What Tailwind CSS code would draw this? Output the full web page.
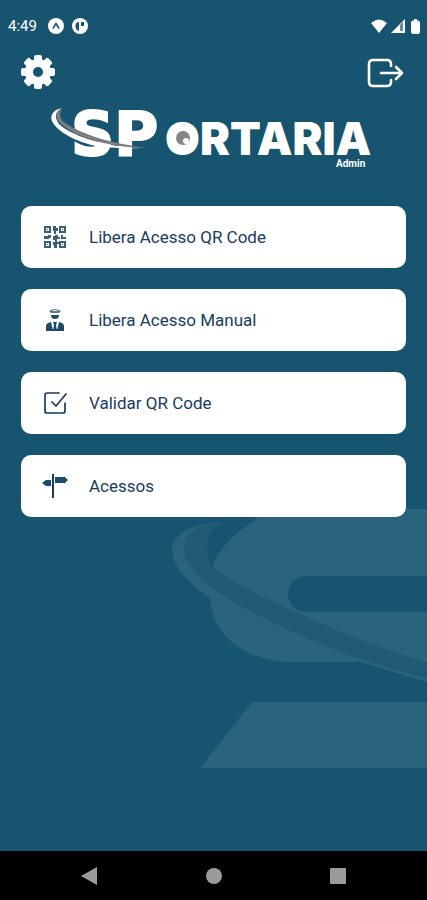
<!DOCTYPE html>
<html lang="pt-BR">
<head>
<meta charset="utf-8">
<meta name="viewport" content="width=device-width, initial-scale=1">
<title>SPortaria Admin</title>
<script src="https://cdn.jsdelivr.net/npm/@tailwindcss/browser@4"></script>
</head>
<body class="bg-[#17546f] font-[Roboto,sans-serif]">
<div class="relative flex min-h-screen flex-col overflow-hidden">

  <!-- Background emblem -->
  <svg class="absolute right-0 top-[505px] h-[275px] w-[267px]" viewBox="0 0 267 275" aria-hidden="true">
    <path fill="#29637c" d="M52 63C62 34 88 4 140 4H267V71H146a18 18 0 0 0 0 36H267V170L200 157H132C88 157 50 132 50 90Z"/>
    <path fill="#29637c" d="M92 197H267V263H40Z"/>
    <path fill="#17546f" d="M200 157H267V177Z"/>
    <path fill="#29637c" d="M58 17C30 19 12 31 12 44C12 62 28 78 50 93C90 122 150 140 200 157L267 177V165L80 90L24 40Z"/>
    <path fill="#205a74" d="M62 17C36 18 24 30 24 43C24 68 62 92 102 112C152 137 200 157 267 173V158C210 140 160 119 107 94C88 85 70 75 52 62C46 50 45 30 62 17Z"/>
    <path fill="#17546f" d="M98 14C82 22 60 40 52 62C45 46 44 28 62 17Z"/>
  </svg>

  <div class="relative flex h-[52px] items-center justify-between pl-2 pr-[7px] text-white">
    <div class="flex items-center gap-2">
      <time class="mr-[3px] text-[15px] leading-5">4:49</time>
      <svg class="size-4" viewBox="0 0 16 16" aria-hidden="true"><circle cx="8" cy="8" r="8" fill="#fff"/><path d="M5 10.500 8 5.500l3 5" fill="none" stroke="#17546f" stroke-width="1.600"/></svg>
      <svg class="size-4" viewBox="0 0 16 16" aria-hidden="true"><circle cx="8" cy="8" r="8" fill="#fff"/><path d="M7 4v9Q3 12 3.500 7 4 4 7 4zM9 4h3v4H9z" fill="#17546f"/></svg>
    </div>
    <div class="flex items-center gap-1">
      <svg class="h-[14px] w-4" viewBox="0 0 16 14" aria-hidden="true"><path fill="#fff" d="M0 4Q8-3 16 4L8 14Z"/></svg>
      <svg class="size-[14px]" viewBox="0 0 14 14" aria-hidden="true"><path fill="#fff" d="M14 0V14H0Z"/><path fill="#68889a" d="M9 6 12 3V12H9Z"/></svg>
      <svg class="ml-[2px] h-[15px] w-[9px]" viewBox="0 0 9 15" aria-hidden="true"><path fill="#fff" d="M3 0h3v1.500h1.500L9 3v10.500L7.500 15h-6L0 13.500V3l1.500-1.500H3z"/></svg>
    </div>
  </div>

  <header class="relative px-5">
    <div class="flex h-10 items-center justify-between">
      <button type="button" aria-label="Configurações">
        <svg class="size-9" viewBox="0 0 36 36" aria-hidden="true">
          <g fill="#fff">
            <circle cx="18" cy="18" r="13"/>
            <g id="teeth"><rect x="14" y="1" width="8" height="34" rx="2"/><rect x="1" y="14" width="34" height="8" rx="2"/></g>
            <use href="#teeth" transform="rotate(45 18 18)"/>
          </g>
          <circle cx="18" cy="18" r="5" fill="#17546f"/>
        </svg>
      </button>
      <button type="button" aria-label="Sair" class="pt-[2px]">
        <svg class="h-8 w-10" viewBox="0 0 40 32" fill="none" stroke="#fff" stroke-width="2.600" stroke-linecap="round" stroke-linejoin="round" aria-hidden="true"><path d="M24 9V7q0-4-4-4H6Q2 3 2 7v18q0 4 4 4h14q4 0 4-4v-2M14 16h21M29 10l6 6-6 6"/></svg>
      </button>
    </div>
    <h1 class="flex justify-center pt-3 pr-1">
      <svg class="h-[68px] w-[324px] overflow-visible" viewBox="0 0 324 68" role="img" aria-label="SPortaria Admin">
        <g fill="#fff">
          <text x="21" y="51" font-family="DejaVu Sans, sans-serif" font-size="60" font-weight="700" stroke="#fff" stroke-width="2">SP</text>
          <text x="115" y="51" font-family="Inter, sans-serif" font-size="45" font-weight="900">ORTARIA</text>
        </g>
        <circle cx="133" cy="35" r="11" fill="#fff"/>
        <circle cx="133" cy="34" r="7" fill="#858585"/>
        <circle cx="136" cy="37" r="3" fill="#fff"/>
        <path fill="#fff" d="M12 4C2 6-1 13 3 19C10 30 30 39 50 43L90 45C50 41 20 31 9 20C4 13 5 8 12 4Z"/>
        <path fill="#7c7c7c" d="M12 5C5 7 5 13 9 18C22 32 54 43 97 44C60 39 33 31 15 19C9 14 9 9 12 5Z"/>
        <text x="286" y="63" font-family="Roboto, sans-serif" font-size="10" font-weight="700" fill="#fff">Admin</text>
      </svg>
    </h1>
  </header>

  <main class="relative flex-1 px-[21px] pt-[34px]">
    <nav class="flex flex-col gap-[21px] text-[17px] leading-6 text-[#173c5e]">
      <a href="#qr" class="flex h-[62px] items-center gap-[21px] rounded-[10px] bg-white pl-[21px]">
        <svg class="size-[26px]" viewBox="0 0 26 26" aria-hidden="true">
          <g fill="none" stroke="#3d6079" stroke-width="2"><path d="M3 3h5v5H3zM18 3h5v5h-5zM3 18h5v5H3zM18 18h5v5h-5z"/></g>
          <path fill="#3d6079" d="M11 2h3v2h2v3h-2v3h-2V7h-1zM2 12h4v-1h3v3H7v1H2zM11 12h2v-1h3v2h2v2h-3v3h3v2h-3v4h-3v-3h-1v-3h2v-2h-2zM19 11h2v2h3v2h-5zM5 5h1v1H5zM20 5h1v1h-1zM5 20h1v1H5zM20 20h1v1h-1z"/>
        </svg>
        <span>Libera Acesso QR Code</span>
      </a>
      <a href="#manual" class="flex h-[62px] items-center gap-[21px] rounded-[10px] bg-white pl-[21px]">
        <svg class="size-[26px]" viewBox="0 0 26 26" fill="#1c4b69" aria-hidden="true">
          <path fill="#5c7d91" d="M7 4Q13 0 19 4l-2 2H9z"/><path fill="#fff" d="M11 3h4v1h-4z"/><path d="M9 8h8q0 4-4 4T9 8z"/><path d="M4 24v-5q0-3 5-4l2 9zM22 24v-5q0-3-5-4l-2 9zM11 15h4l-1 3 1 6h-4l1-6z"/><path d="M4 22h18v2H4z"/>
        </svg>
        <span>Libera Acesso Manual</span>
      </a>
      <a href="#validar" class="flex h-[62px] items-center gap-[21px] rounded-[10px] bg-white pl-[21px]">
        <svg class="size-[26px]" viewBox="0 0 26 26" fill="none" stroke="#173c5e" stroke-width="1.700" stroke-linecap="round" stroke-linejoin="round" aria-hidden="true"><path d="M17 3H5Q3 3 3 5v16q0 2 2 2h16q2 0 2-2v-8M10 12l4 4L24 4"/></svg>
        <span>Validar QR Code</span>
      </a>
      <a href="#acessos" class="flex h-[62px] items-center gap-[21px] rounded-[10px] bg-white pl-[21px]">
        <svg class="size-[26px]" viewBox="0 0 26 26" fill="#1c4b69" aria-hidden="true"><path fill="#173c5e" d="M10 1h2v24h-2z"/><path d="M9 7v6H4L0 10l4-3zM13 4h10l3 3-3 3H13z"/></svg>
        <span>Acessos</span>
      </a>
    </nav>
  </main>

  <footer class="relative grid h-[49px] grid-cols-[1fr_auto_1fr] items-center bg-black px-[81px]">
    <button type="button" aria-label="Voltar" class="justify-self-start"><svg class="h-[18px] w-4" viewBox="0 0 16 18" aria-hidden="true"><path fill="#9b9b9b" d="M16 0v18L0 9z"/></svg></button>
    <button type="button" aria-label="Início" class="size-4 rounded-full bg-[#9b9b9b]"></button>
    <button type="button" aria-label="Recentes" class="size-4 justify-self-end rounded-[1px] bg-[#9b9b9b]"></button>
  </footer>
</div>
</body>
</html>
